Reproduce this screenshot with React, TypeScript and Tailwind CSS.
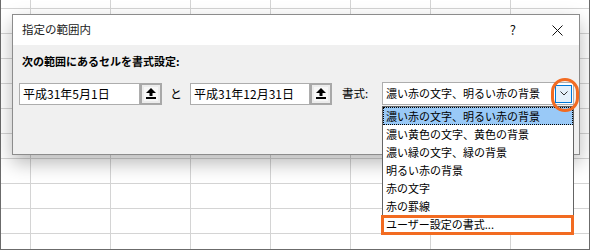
import React from 'react';

const ROWS = [9, 25, 25, 25, 25, 25, 25, 25, 25, 25, 20];
const COLS = [30, 80, 80, 80, 80, 80, 80, 80];

const ITEMS = [
  '濃い赤の文字、明るい赤の背景',
  '濃い黄色の文字、黄色の背景',
  '濃い緑の文字、緑の背景',
  '明るい赤の背景',
  '赤の文字',
  '赤の罫線',
  'ユーザー設定の書式...',
];

// --- small drawn glyphs ---
const RefEditArrow = () => (
  <svg width="10" height="11" viewBox="0 0 10 11">
    <polygon points="5,0 10,5 0,5" fill="#000" />
    <rect x="3.5" y="4" width="3" height="4" fill="#000" />
    <rect x="0" y="9" width="10" height="2" fill="#000" />
  </svg>
);

const CloseIcon = () => (
  <svg width="11" height="11" viewBox="0 0 11 11">
    <path d="M0.5 0.5 L10.5 10.5 M10.5 0.5 L0.5 10.5" stroke="#111" strokeWidth="1" />
  </svg>
);

const Chevron = () => (
  <svg width="8" height="5" viewBox="0 0 8 5">
    <path d="M0.5 0.5 L4 4 L7.5 0.5" stroke="#333" strokeWidth="1" fill="none" />
  </svg>
);

const DateBox = ({ value, width }: { value: string; width: string }) => (
  <div className="flex items-stretch h-[22px] shrink-0">
    <div className={`${width} bg-white border border-[#adadad] flex items-center pl-[3px] text-[12px] text-black whitespace-nowrap overflow-hidden`}>
      {value}
    </div>
    <div className="w-[22px] border-2 border-[#a8a8a8] bg-[#ececec] flex items-center justify-center">
      <div className="w-[14px] h-[14px] bg-[#f7f7f7] flex items-center justify-center">
        <RefEditArrow />
      </div>
    </div>
  </div>
);

export default function App() {
  return (
    <div className="relative w-[590px] h-[250px] overflow-hidden bg-white font-['Noto_Sans_CJK_JP','Noto_Sans',sans-serif]">
      {/* spreadsheet grid behind the dialog */}
      <div className="h-full border-x border-b border-[#6b6b6b] flex flex-col overflow-hidden">
        {ROWS.map((h, r) => (
          <div key={r} className="flex shrink-0" style={{ height: h }}>
            {COLS.map((w, c) => (
              <div
                key={c}
                className="shrink-0 border-r border-b border-[#d4d4d4]"
                style={{ width: w }}
              />
            ))}
          </div>
        ))}
      </div>

      {/* dialog */}
      <div className="absolute left-[12px] top-[14px] w-[568px] h-[141px] border border-[#8c8c8c] bg-[#f0f0f0] shadow-[0_8px_18px_rgba(0,0,0,0.28)] flex flex-col">
        <div className="h-[30px] bg-white flex items-center justify-between pl-[9px] pr-[16px]">
          <span className="text-[11.5px] text-[#222]">指定の範囲内</span>
          <div className="flex items-center gap-[36px]">
            <span className="text-[13px] text-[#111]">?</span>
            <CloseIcon />
          </div>
        </div>

        <div className="flex-1 flex flex-col px-[6px] pt-[8px]">
          <div className="ml-[3px] text-[11px] font-bold text-black leading-[16px] whitespace-nowrap">
            次の範囲にあるセルを書式設定:
          </div>

          <div className="mt-[13px] flex items-center">
            <DateBox value="平成31年5月1日" width="w-[121px]" />
            <span className="shrink-0 w-[28px] text-center text-[12px] text-black">と</span>
            <DateBox value="平成31年12月31日" width="w-[120px]" />
            <span className="shrink-0 w-[50px] pl-[10px] text-[11.5px] text-black whitespace-nowrap">書式:</span>
            <div className="shrink-0 w-[192px] h-[23px] bg-white border border-[#adadad] flex items-center justify-between pl-[3px] pr-[1px]">
              <span className="text-[11px] text-black whitespace-nowrap overflow-hidden">濃い赤の文字、明るい赤の背景</span>
              <div className="shrink-0 w-[17px] h-[18px] bg-[#e5f1fb] border border-[#0078d7] flex items-center justify-center">
                <Chevron />
              </div>
            </div>
          </div>
        </div>
      </div>

      {/* dropped list */}
      <div className="absolute left-[382px] top-[106px] w-[192px] bg-white border border-[#646464] flex flex-col">
        {ITEMS.map((item, i) => (
          <div
            key={item}
            className={
              i === 0
                ? 'h-[18px] flex items-center pl-[2px] text-[11px] text-black whitespace-nowrap bg-[#99c9f7] border border-dotted border-black'
                : 'h-[18px] flex items-center pl-[3px] text-[11px] text-black whitespace-nowrap'
            }
          >
            {item}
          </div>
        ))}
      </div>

      {/* callout marks */}
      <div className="absolute left-[381px] top-[215px] w-[193px] h-[20px] border-[3px] border-[#f26b21]" />
      <div className="absolute left-[551px] top-[78px] w-[28px] h-[34px] rounded-full border-[3px] border-[#f26b21]" />
    </div>
  );
}
